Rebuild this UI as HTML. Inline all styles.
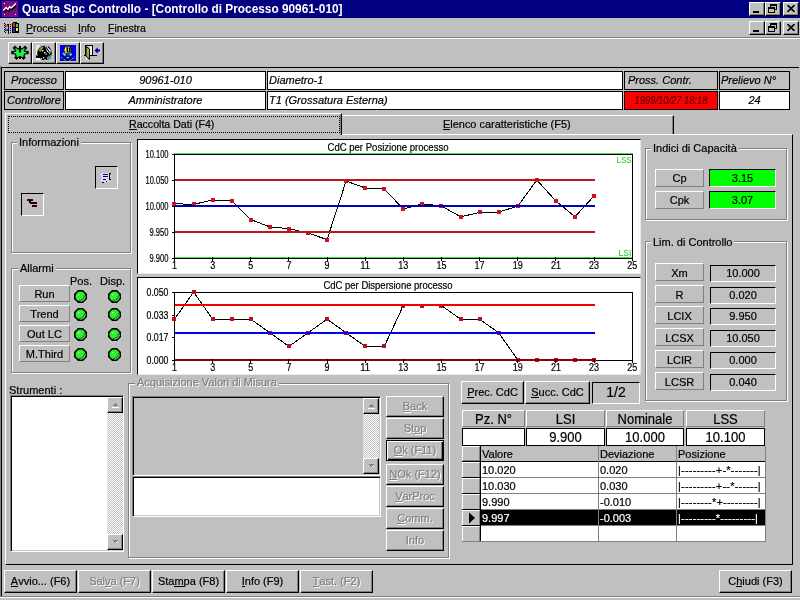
<!DOCTYPE html>
<html><head><meta charset="utf-8"><style>
*{box-sizing:border-box}
html,body{margin:0;padding:0}
body{-webkit-font-smoothing:antialiased;width:800px;height:600px;background:#c0c0c0;position:relative;overflow:hidden;font-family:"Liberation Sans",sans-serif;font-size:11px;color:#000}
.a{position:absolute}
.t{position:absolute;white-space:nowrap;line-height:13px;-webkit-text-stroke:0.2px currentColor}
.gl{-webkit-text-stroke:0.2px currentColor}
.rb{position:absolute;background:#c0c0c0;border:1px solid;border-color:#fff #000 #000 #fff;box-shadow:inset -1px -1px #808080}
.tr{position:absolute;background:#c0c0c0;border:1px solid;border-color:#fff #808080 #808080 #fff}
.sk{position:absolute;border:1px solid;border-color:#000 #fff #fff #000}
.s2{position:absolute;border:1px solid;border-color:#808080 #fff #fff #808080;box-shadow:inset 1px 1px #000,inset -1px -1px #c8c8c8}
.g{position:absolute;border:1px solid #808080;box-shadow:inset 1px 1px #fff,1px 1px #fff}
.gl{position:absolute;background:#c0c0c0;padding:0 2px;line-height:13px;white-space:nowrap}
.dis{color:#808080;text-shadow:1px 1px #fff}
u{text-decoration:none;position:relative}
u:after{content:"";position:absolute;left:0;right:0;bottom:0;height:1px;background:currentColor}
.dis u:after{box-shadow:1px 1px #fff}
</style></head><body><div style="position:absolute;left:0;top:0;width:800px;height:600px;will-change:transform">
<div class="a" style="left:0px;top:0px;width:800px;height:18px;background:#000080;"></div>
<svg class="a" style="left:2px;top:1px" width="16" height="16" viewBox="0 0 16 16" shape-rendering="crispEdges">
<rect x="0" y="0" width="16" height="16" fill="#780a88"/>
<rect x="2" y="2" width="1" height="1" fill="#fff"/><rect x="13" y="2" width="1" height="1" fill="#fff"/>
<rect x="2" y="13" width="1" height="1" fill="#fff"/><rect x="13" y="13" width="1" height="1" fill="#fff"/>
<polyline points="1.3,9.5 4,6.5 6,8.5 7.5,5.5 9,7 13.5,3" fill="none" stroke="#000" stroke-width="1.6" transform="translate(0.8,1.6)" shape-rendering="auto"/>
<polyline points="1.3,9.5 4,6.5 6,8.5 7.5,5.5 9,7 13.5,3" fill="none" stroke="#fff" stroke-width="1.3" shape-rendering="auto"/>
</svg>
<div class="t" style="left:22px;top:3px;font-size:11.85px;color:#fff;font-weight:bold;-webkit-text-stroke:0">Quarta Spc Controllo - [Controllo di Processo 90961-010]</div>
<div class="rb" style="left:749px;top:2px;width:16px;height:14px;"></div>
<div class="a" style="left:753px;top:11px;width:6px;height:2px;background:#000;"></div>
<div class="rb" style="left:765px;top:2px;width:16px;height:14px;"></div>
<svg class="a" style="left:768px;top:4px" width="9" height="9" viewBox="0 0 9 9" shape-rendering="crispEdges"><rect x="2.5" y="0.5" width="6" height="5" fill="none" stroke="#000"/><rect x="2" y="1" width="7" height="1" fill="#000"/><rect x="0.5" y="3.5" width="6" height="5" fill="#c0c0c0" stroke="#000"/><rect x="0" y="4" width="7" height="1" fill="#000"/></svg>
<div class="rb" style="left:783px;top:2px;width:16px;height:14px;"></div>
<svg class="a" style="left:787px;top:5px" width="8" height="7" viewBox="0 0 8 7"><path d="M0.5,0 L7.5,7 M7.5,0 L0.5,7" stroke="#000" stroke-width="1.6"/></svg>
<div class="rb" style="left:749px;top:21px;width:16px;height:14px;"></div>
<div class="a" style="left:753px;top:30px;width:6px;height:2px;background:#000;"></div>
<div class="rb" style="left:765px;top:21px;width:16px;height:14px;"></div>
<svg class="a" style="left:768px;top:23px" width="9" height="9" viewBox="0 0 9 9" shape-rendering="crispEdges"><rect x="2.5" y="0.5" width="6" height="5" fill="none" stroke="#000"/><rect x="2" y="1" width="7" height="1" fill="#000"/><rect x="0.5" y="3.5" width="6" height="5" fill="#c0c0c0" stroke="#000"/><rect x="0" y="4" width="7" height="1" fill="#000"/></svg>
<div class="rb" style="left:783px;top:21px;width:16px;height:14px;"></div>
<svg class="a" style="left:787px;top:24px" width="8" height="7" viewBox="0 0 8 7"><path d="M0.5,0 L7.5,7 M7.5,0 L0.5,7" stroke="#000" stroke-width="1.6"/></svg>
<svg class="a" style="left:0px;top:18px" width="24" height="20" viewBox="0 18 24 20" shape-rendering="crispEdges">
<rect x="4" y="25" width="8" height="2" fill="#f0a0a0"/><rect x="4" y="29" width="8" height="2" fill="#a8b8f0"/>
<rect x="6" y="25" width="3" height="2" fill="#e04040"/><rect x="6" y="29" width="3" height="2" fill="#3040c0"/>
<g fill="#000"><rect x="4" y="23" width="1" height="1"/><rect x="5" y="24" width="1" height="1"/><rect x="4" y="25" width="1" height="1"/><rect x="5" y="26" width="1" height="1"/><rect x="4" y="27" width="1" height="1"/><rect x="5" y="28" width="1" height="1"/><rect x="4" y="29" width="1" height="1"/><rect x="5" y="30" width="1" height="1"/><rect x="4" y="31" width="1" height="1"/><rect x="5" y="32" width="1" height="1"/>
<rect x="8" y="24" width="1" height="10"/><rect x="7" y="24" width="1" height="1"/>
<rect x="10" y="24" width="1" height="1"/><rect x="10" y="26" width="1" height="1"/><rect x="10" y="28" width="1" height="1"/><rect x="10" y="30" width="1" height="1"/><rect x="10" y="32" width="1" height="1"/>
<rect x="12" y="23" width="7" height="10"/><rect x="13" y="22" width="4" height="1"/></g>
<rect x="13" y="23" width="2" height="4" fill="#a05028"/><rect x="16" y="24" width="2" height="3" fill="#40d040"/>
<rect x="13" y="28" width="2" height="4" fill="#4020a0"/><rect x="16" y="28" width="2" height="3" fill="#f0f060"/>
</svg>
<div class="t" style="left:26px;top:22px;font-size:10.5px;"><u>P</u>rocessi</div>
<div class="t" style="left:78px;top:22px;font-size:10.5px;"><u>I</u>nfo</div>
<div class="t" style="left:108px;top:22px;font-size:10.5px;"><u>F</u>inestra</div>
<div class="a" style="left:0px;top:37px;width:800px;height:1px;background:#808080;"></div>
<div class="a" style="left:0px;top:38px;width:800px;height:1px;background:#fff;"></div>
<div class="rb" style="left:8px;top:42px;width:24px;height:22px;"></div>
<div class="rb" style="left:32px;top:42px;width:24px;height:22px;"></div>
<div class="rb" style="left:56px;top:42px;width:24px;height:22px;"></div>
<div class="rb" style="left:80px;top:42px;width:24px;height:22px;"></div>
<svg class="a" style="left:10px;top:44px" width="20" height="17" viewBox="0 0 20 17">
<g stroke="#000" stroke-width="3.4" stroke-linecap="square"><path d="M10,9 L5,4 M10,9 L15,4 M10,9 L3,8.5 M10,9 L17,8.5 M10,9 L6.5,13.5 M10,9 L13.5,13.5"/></g>
<ellipse cx="10" cy="9" rx="5.6" ry="5" fill="#000"/>
<g stroke="#20f040" stroke-width="1.5"><path d="M10,9 L5.5,4.5 M10,9 L14.5,4.5 M10,9 L3.5,8.5 M10,9 L16.5,8.5 M10,9 L7,13 M10,9 L13,13"/></g>
<ellipse cx="10" cy="9" rx="4.4" ry="3.8" fill="#20f040"/>
<rect x="9" y="2" width="2" height="6.5" fill="#000"/><rect x="9" y="12" width="2" height="3" fill="#000"/>
</svg>
<svg class="a" style="left:32px;top:42px" width="24" height="22" viewBox="0 0 24 22">
<rect x="4" y="3" width="4" height="10" fill="#e8e8e8"/>
<circle cx="12.5" cy="11" r="7.3" fill="#000"/>
<path d="M6.5,8.5 L8,5.5 L11.5,4.5 L11,6.5 L8.5,10 Z" fill="#8a8a40"/>
<path d="M13,4 L16,4.5 L18.8,8.5 L18,12 L15,9.5 Z" fill="#f4f4f4"/>
<path d="M14,5 L17.5,10.5 M16,4.5 L18,7" stroke="#000" stroke-width="1.1"/>
<rect x="10" y="8" width="1.4" height="1.4" fill="#f0f0a0"/><rect x="12" y="10" width="1.4" height="1.4" fill="#fff"/><rect x="13.5" y="11.5" width="1.2" height="1.2" fill="#fff"/>
<rect x="4" y="13.5" width="8" height="2.6" fill="#000"/>
<rect x="4" y="16" width="4.5" height="2.5" fill="#f4f4f4"/>
<rect x="9" y="16" width="1.2" height="1.2" fill="#d0d0ff"/><rect x="11" y="15" width="1.2" height="1.2" fill="#fff"/><rect x="12.5" y="17" width="1.2" height="1.2" fill="#e0e0ff"/>
<path d="M14.5,15.5 L18.5,12.5 L19,16.5 L16,18.5 Z" fill="#409a9a"/>
</svg>
<svg class="a" style="left:60px;top:45px" width="16" height="16" viewBox="0 0 16 16">
<rect x="0" y="0" width="16" height="16" fill="#0000e8"/>
<ellipse cx="7.5" cy="5" rx="3.6" ry="4" fill="#e8e850" stroke="#000" stroke-width="0.8"/>
<rect x="6.6" y="2" width="1.4" height="5.5" fill="#000"/>
<path d="M9,2.5 Q10.8,5 8.5,7.5" stroke="#000" stroke-width="1.2" fill="none"/>
<rect x="7" y="8.5" width="2" height="2" fill="#404000"/>
<path d="M3,8 L5.5,10.5 M11.5,8.5 L9.8,10.5" stroke="#40d8f0" stroke-width="2"/>
<path d="M1.5,10.5 L7.5,15.8 L14,10.5" stroke="#000" stroke-width="1.2" fill="none"/>
<path d="M0.8,11.8 L7.5,17 L14.8,11.8" stroke="#b0b0ff" stroke-width="1" fill="none" stroke-dasharray="1.2,0.8"/>
<rect x="6.5" y="12" width="2.5" height="1.2" fill="#60e0e0"/>
</svg>
<svg class="a" style="left:80px;top:42px" width="24" height="22" viewBox="0 0 24 22" shape-rendering="crispEdges">
<rect x="6" y="4" width="1" height="14" fill="#e8e8e8"/>
<rect x="10" y="4" width="2.5" height="10" fill="#f0f0f0"/>
<rect x="5" y="3" width="8" height="1" fill="#000"/><rect x="12" y="3" width="1" height="11" fill="#000"/>
<rect x="5" y="3" width="1" height="11" fill="#000"/><rect x="4" y="13" width="13" height="1" fill="#000"/>
<path d="M6,4.5 L9.5,7 L9.5,17.5 L6,14 Z" fill="#a8a840" stroke="#000" stroke-width="1" shape-rendering="auto"/>
<path d="M14.5,8.5 L17.5,5.5 L18,7.5 L20,7.5 L20,9.5 L18,9.5 L17.5,11.5 Z" fill="#0000b0" shape-rendering="auto"/>
</svg>
<div class="a" style="left:1px;top:67px;width:798px;height:1px;background:#000;"></div>
<div class="a" style="left:1px;top:67px;width:1px;height:530px;background:#000;"></div>
<div class="a" style="left:0px;top:66px;width:1px;height:531px;background:#808080;"></div>
<div class="a" style="left:4px;top:71px;width:60px;height:19px;background:#c0c0c0;border:1px solid #000"></div>
<div class="t" style="left:4px;top:74px;width:60px;text-align:center;font-style:italic;color:#000;">Processo</div>
<div class="a" style="left:65px;top:71px;width:201px;height:19px;background:#fff;border:1px solid #000"></div>
<div class="t" style="left:65px;top:74px;width:201px;text-align:center;font-style:italic;color:#000;">90961-010</div>
<div class="a" style="left:267px;top:71px;width:356px;height:19px;background:#fff;border:1px solid #000"></div>
<div class="t" style="left:269px;top:74px;font-style:italic;color:#000">Diametro-1</div>
<div class="a" style="left:624px;top:71px;width:94px;height:19px;background:#c0c0c0;border:1px solid #000"></div>
<div class="t" style="left:628px;top:74px;font-style:italic;color:#000">Pross. Contr.</div>
<div class="a" style="left:719px;top:71px;width:71px;height:19px;background:#c0c0c0;border:1px solid #000"></div>
<div class="t" style="left:721px;top:74px;font-style:italic;color:#000">Prelievo N°</div>
<div class="a" style="left:4px;top:91px;width:60px;height:19px;background:#c0c0c0;border:1px solid #000"></div>
<div class="t" style="left:4px;top:94px;width:60px;text-align:center;font-style:italic;color:#000;">Controllore</div>
<div class="a" style="left:65px;top:91px;width:201px;height:19px;background:#fff;border:1px solid #000"></div>
<div class="t" style="left:65px;top:94px;width:201px;text-align:center;font-style:italic;color:#000;">Amministratore</div>
<div class="a" style="left:267px;top:91px;width:356px;height:19px;background:#fff;border:1px solid #000"></div>
<div class="t" style="left:269px;top:94px;font-style:italic;color:#000">T1 (Grossatura Esterna)</div>
<div class="a" style="left:624px;top:91px;width:94px;height:19px;background:#ff0000;border:1px solid #000"></div>
<div class="t" style="left:624px;top:94px;width:94px;text-align:center;font-style:italic;color:#500000;transform:scaleX(0.85)">1999/10/27 18:18</div>
<div class="a" style="left:719px;top:91px;width:71px;height:19px;background:#fff;border:1px solid #000"></div>
<div class="t" style="left:719px;top:94px;width:71px;text-align:center;font-style:italic;color:#000;">24</div>
<div class="a" style="left:5px;top:134px;width:788px;height:431px;border:1px solid;border-color:#fff #000 #000 #fff"></div>
<div class="a" style="left:342px;top:115px;width:332px;height:19px;border-top:1px solid #fff;border-right:1px solid #000;box-shadow:inset -1px 0 #808080"></div>
<div class="a" style="left:5px;top:113px;width:337px;height:22px;background:#c0c0c0;border-top:1px solid #fff;border-left:1px solid #fff;border-right:1px solid #000;box-shadow:inset -1px 0 #808080"></div>
<div class="a" style="left:8px;top:116px;width:332px;height:17px;border:1px dotted #000"></div>
<div class="t" style="left:129px;top:118px;font-size:10.6px;"><u>R</u>accolta Dati (F4)</div>
<div class="t" style="left:443px;top:118px;font-size:10.95px;"><u>E</u>lenco caratteristiche (F5)</div>
<div class="g" style="left:11px;top:142px;width:120px;height:111px;"></div>
<div class="gl" style="left:17px;top:136px;font-size:11px;">Informazioni</div>
<div class="sk" style="left:95px;top:166px;width:23px;height:23px;"></div>
<svg class="a" style="left:100px;top:172px" width="12" height="12" viewBox="0 0 12 12" shape-rendering="crispEdges">
<rect x="1" y="1" width="8" height="9" fill="#d8d8f8"/>
<rect x="3" y="2" width="5" height="1" fill="#000080"/><rect x="3" y="4" width="5" height="1" fill="#000080"/><rect x="3" y="7" width="3" height="1" fill="#000080"/>
<rect x="9" y="1" width="2" height="7" fill="#000"/><rect x="10" y="2" width="1" height="5" fill="#c0c0c0"/>
<rect x="2" y="10" width="2" height="1" fill="#000"/><rect x="6" y="9" width="1" height="1" fill="#000"/>
</svg>
<div class="sk" style="left:21px;top:193px;width:23px;height:23px;"></div>
<svg class="a" style="left:26px;top:198px" width="14" height="12" viewBox="0 0 14 12" shape-rendering="crispEdges">
<rect x="1" y="1" width="6" height="2" fill="#400000"/><rect x="3" y="2" width="2" height="3" fill="#000"/>
<rect x="4" y="4" width="7" height="2" fill="#200000"/><rect x="6" y="7" width="5" height="2" fill="#200000"/>
</svg>
<div class="g" style="left:11px;top:268px;width:120px;height:105px;"></div>
<div class="gl" style="left:18px;top:262px;font-size:11px;">Allarmi</div>
<div class="t" style="left:70px;top:275px;font-size:11px;">Pos.</div>
<div class="t" style="left:100px;top:275px;font-size:11px;">Disp.</div>
<div class="tr" style="left:19px;top:285px;width:51px;height:17px;"></div>
<div class="t" style="left:19.0px;top:288px;width:51px;text-align:center;font-size:11px;">Run</div>
<svg class="a" style="left:74px;top:290px" width="13" height="13" viewBox="0 0 13 13"><polygon points="4,0 9,0 13,4 13,9 9,13 4,13 0,9 0,4" fill="#000"/><circle cx="6.5" cy="6.5" r="5.1" fill="#28e028"/><circle cx="6.2" cy="6.2" r="3.9" fill="#30f030"/><path d="M10.2,5.6 A4,4 0 0 1 5.4,10.3" stroke="#005000" stroke-width="1" fill="none"/><path d="M11.2,6.5 A4.8,4.8 0 0 1 6.5,11.2" stroke="#70ff70" stroke-width="0.8" fill="none"/><rect x="4" y="4" width="1.5" height="1.5" fill="#b0ffb0"/></svg>
<svg class="a" style="left:108px;top:290px" width="13" height="13" viewBox="0 0 13 13"><polygon points="4,0 9,0 13,4 13,9 9,13 4,13 0,9 0,4" fill="#000"/><circle cx="6.5" cy="6.5" r="5.1" fill="#28e028"/><circle cx="6.2" cy="6.2" r="3.9" fill="#30f030"/><path d="M10.2,5.6 A4,4 0 0 1 5.4,10.3" stroke="#005000" stroke-width="1" fill="none"/><path d="M11.2,6.5 A4.8,4.8 0 0 1 6.5,11.2" stroke="#70ff70" stroke-width="0.8" fill="none"/><rect x="4" y="4" width="1.5" height="1.5" fill="#b0ffb0"/></svg>
<div class="tr" style="left:19px;top:305px;width:51px;height:17px;"></div>
<div class="t" style="left:19.0px;top:308px;width:51px;text-align:center;font-size:11px;">Trend</div>
<svg class="a" style="left:74px;top:308px" width="13" height="13" viewBox="0 0 13 13"><polygon points="4,0 9,0 13,4 13,9 9,13 4,13 0,9 0,4" fill="#000"/><circle cx="6.5" cy="6.5" r="5.1" fill="#28e028"/><circle cx="6.2" cy="6.2" r="3.9" fill="#30f030"/><path d="M10.2,5.6 A4,4 0 0 1 5.4,10.3" stroke="#005000" stroke-width="1" fill="none"/><path d="M11.2,6.5 A4.8,4.8 0 0 1 6.5,11.2" stroke="#70ff70" stroke-width="0.8" fill="none"/><rect x="4" y="4" width="1.5" height="1.5" fill="#b0ffb0"/></svg>
<svg class="a" style="left:108px;top:308px" width="13" height="13" viewBox="0 0 13 13"><polygon points="4,0 9,0 13,4 13,9 9,13 4,13 0,9 0,4" fill="#000"/><circle cx="6.5" cy="6.5" r="5.1" fill="#28e028"/><circle cx="6.2" cy="6.2" r="3.9" fill="#30f030"/><path d="M10.2,5.6 A4,4 0 0 1 5.4,10.3" stroke="#005000" stroke-width="1" fill="none"/><path d="M11.2,6.5 A4.8,4.8 0 0 1 6.5,11.2" stroke="#70ff70" stroke-width="0.8" fill="none"/><rect x="4" y="4" width="1.5" height="1.5" fill="#b0ffb0"/></svg>
<div class="tr" style="left:19px;top:325px;width:51px;height:17px;"></div>
<div class="t" style="left:19.0px;top:328px;width:51px;text-align:center;font-size:11px;">Out LC</div>
<svg class="a" style="left:74px;top:328px" width="13" height="13" viewBox="0 0 13 13"><polygon points="4,0 9,0 13,4 13,9 9,13 4,13 0,9 0,4" fill="#000"/><circle cx="6.5" cy="6.5" r="5.1" fill="#28e028"/><circle cx="6.2" cy="6.2" r="3.9" fill="#30f030"/><path d="M10.2,5.6 A4,4 0 0 1 5.4,10.3" stroke="#005000" stroke-width="1" fill="none"/><path d="M11.2,6.5 A4.8,4.8 0 0 1 6.5,11.2" stroke="#70ff70" stroke-width="0.8" fill="none"/><rect x="4" y="4" width="1.5" height="1.5" fill="#b0ffb0"/></svg>
<svg class="a" style="left:108px;top:328px" width="13" height="13" viewBox="0 0 13 13"><polygon points="4,0 9,0 13,4 13,9 9,13 4,13 0,9 0,4" fill="#000"/><circle cx="6.5" cy="6.5" r="5.1" fill="#28e028"/><circle cx="6.2" cy="6.2" r="3.9" fill="#30f030"/><path d="M10.2,5.6 A4,4 0 0 1 5.4,10.3" stroke="#005000" stroke-width="1" fill="none"/><path d="M11.2,6.5 A4.8,4.8 0 0 1 6.5,11.2" stroke="#70ff70" stroke-width="0.8" fill="none"/><rect x="4" y="4" width="1.5" height="1.5" fill="#b0ffb0"/></svg>
<div class="tr" style="left:19px;top:345px;width:51px;height:17px;"></div>
<div class="t" style="left:19.0px;top:348px;width:51px;text-align:center;font-size:11px;">M.Third</div>
<svg class="a" style="left:74px;top:348px" width="13" height="13" viewBox="0 0 13 13"><polygon points="4,0 9,0 13,4 13,9 9,13 4,13 0,9 0,4" fill="#000"/><circle cx="6.5" cy="6.5" r="5.1" fill="#28e028"/><circle cx="6.2" cy="6.2" r="3.9" fill="#30f030"/><path d="M10.2,5.6 A4,4 0 0 1 5.4,10.3" stroke="#005000" stroke-width="1" fill="none"/><path d="M11.2,6.5 A4.8,4.8 0 0 1 6.5,11.2" stroke="#70ff70" stroke-width="0.8" fill="none"/><rect x="4" y="4" width="1.5" height="1.5" fill="#b0ffb0"/></svg>
<svg class="a" style="left:108px;top:348px" width="13" height="13" viewBox="0 0 13 13"><polygon points="4,0 9,0 13,4 13,9 9,13 4,13 0,9 0,4" fill="#000"/><circle cx="6.5" cy="6.5" r="5.1" fill="#28e028"/><circle cx="6.2" cy="6.2" r="3.9" fill="#30f030"/><path d="M10.2,5.6 A4,4 0 0 1 5.4,10.3" stroke="#005000" stroke-width="1" fill="none"/><path d="M11.2,6.5 A4.8,4.8 0 0 1 6.5,11.2" stroke="#70ff70" stroke-width="0.8" fill="none"/><rect x="4" y="4" width="1.5" height="1.5" fill="#b0ffb0"/></svg>
<div class="t" style="left:9px;top:384px;font-size:11px;">Strumenti :</div>
<div class="s2" style="left:10px;top:395px;width:114px;height:157px;background:#fff"></div>
<div class="a" style="left:107px;top:397px;width:16px;height:153px;background:#e0e0e0;background-image:repeating-conic-gradient(#c0c0c0 0 25%,#fff 0 50%);background-size:2px 2px"></div>
<div class="rb" style="left:107px;top:397px;width:16px;height:16px;"></div>
<svg class="a" style="left:111px;top:402px" width="8" height="6" viewBox="0 0 8 6" shape-rendering="crispEdges"><path d="M1,4 L4,1 L7,4 Z" fill="#808080"/><rect x="1" y="5" width="7" height="1" fill="#fff"/></svg>
<div class="rb" style="left:107px;top:534px;width:16px;height:16px;"></div>
<svg class="a" style="left:111px;top:539px" width="8" height="6" viewBox="0 0 8 6" shape-rendering="crispEdges"><path d="M1,1 L7,1 L4,4 Z" fill="#808080"/><path d="M5,4 L7,2" stroke="#fff"/></svg>
<div class="g" style="left:128px;top:383px;width:321px;height:175px;"></div>
<div class="gl dis" style="left:135px;top:376px;font-size:11px;">Acquisizione Valori di Misura</div>
<div class="s2" style="left:132px;top:396px;width:249px;height:80px;background:#c0c0c0"></div>
<div class="a" style="left:363px;top:398px;width:16px;height:76px;background:#e0e0e0;background-image:repeating-conic-gradient(#c0c0c0 0 25%,#fff 0 50%);background-size:2px 2px"></div>
<div class="rb" style="left:363px;top:398px;width:16px;height:16px;"></div>
<svg class="a" style="left:367px;top:403px" width="8" height="6" viewBox="0 0 8 6" shape-rendering="crispEdges"><path d="M1,4 L4,1 L7,4 Z" fill="#808080"/><rect x="1" y="5" width="7" height="1" fill="#fff"/></svg>
<div class="rb" style="left:363px;top:458px;width:16px;height:16px;"></div>
<svg class="a" style="left:367px;top:463px" width="8" height="6" viewBox="0 0 8 6" shape-rendering="crispEdges"><path d="M1,1 L7,1 L4,4 Z" fill="#808080"/><path d="M5,4 L7,2" stroke="#fff"/></svg>
<div class="s2" style="left:132px;top:476px;width:249px;height:41px;background:#fff"></div>
<div class="rb" style="left:386px;top:396px;width:58px;height:21px;"></div>
<div class="t dis" style="left:386.0px;top:400px;width:58px;text-align:center;font-size:11px;"><u>B</u>ack</div>
<div class="rb" style="left:386px;top:418px;width:58px;height:21px;"></div>
<div class="t dis" style="left:386.0px;top:422px;width:58px;text-align:center;font-size:11px;">St<u>o</u>p</div>
<div class="a" style="left:386px;top:440px;width:58px;height:21px;background:#c0c0c0;border:1px solid #000;box-shadow:inset 1px 1px #fff,inset -1px -1px #000,inset -2px -2px #808080"></div>
<div class="t dis" style="left:386.0px;top:444px;width:58px;text-align:center;font-size:11px;"><u>O</u>k (F11)</div>
<div class="rb" style="left:386px;top:464px;width:58px;height:21px;"></div>
<div class="t dis" style="left:386.0px;top:468px;width:58px;text-align:center;font-size:11px;"><u>N</u>Ok (F12)</div>
<div class="rb" style="left:386px;top:486px;width:58px;height:21px;"></div>
<div class="t dis" style="left:386.0px;top:490px;width:58px;text-align:center;font-size:11px;"><u>V</u>arProc</div>
<div class="rb" style="left:386px;top:508px;width:58px;height:21px;"></div>
<div class="t dis" style="left:386.0px;top:512px;width:58px;text-align:center;font-size:11px;"><u>C</u>omm.</div>
<div class="rb" style="left:386px;top:530px;width:58px;height:21px;"></div>
<div class="t dis" style="left:386.0px;top:534px;width:58px;text-align:center;font-size:11px;">Info</div>
<div class="a" style="left:137px;top:139px;width:504px;height:135px;background:#fff;border:1px solid;border-color:#000 #e8e8e8 #e8e8e8 #000"></div>
<div class="a" style="left:137px;top:277px;width:504px;height:98px;background:#fff;border:1px solid;border-color:#000 #e8e8e8 #e8e8e8 #000"></div>
<svg class="a" style="left:0;top:0;pointer-events:none" width="800" height="600" viewBox="0 0 800 600" shape-rendering="crispEdges">
<style>text{stroke:currentColor;stroke-width:0.2px}</style>
<text x="388" y="150.5" font-family="Liberation Sans" font-size="10" text-anchor="middle" textLength="121" lengthAdjust="spacingAndGlyphs">CdC per Posizione processo</text>
<rect x="174" y="153" width="459" height="1" fill="#40e040"/>
<rect x="174" y="257" width="459" height="1" fill="#40e040"/>
<rect x="174" y="154" width="459" height="1" fill="#000"/>
<rect x="174" y="258" width="459" height="1" fill="#000"/>
<rect x="174" y="154" width="1" height="105" fill="#000"/>
<rect x="632" y="154" width="1" height="105" fill="#000"/>
<rect x="172" y="154" width="2" height="1" fill="#000"/>
<text x="168.5" y="158" font-family="Liberation Sans" font-size="10.5" text-anchor="end" textLength="23" lengthAdjust="spacingAndGlyphs">10.100</text>
<rect x="172" y="180" width="2" height="1" fill="#000"/>
<text x="168.5" y="184" font-family="Liberation Sans" font-size="10.5" text-anchor="end" textLength="23" lengthAdjust="spacingAndGlyphs">10.050</text>
<rect x="172" y="206" width="2" height="1" fill="#000"/>
<text x="168.5" y="210" font-family="Liberation Sans" font-size="10.5" text-anchor="end" textLength="23" lengthAdjust="spacingAndGlyphs">10.000</text>
<rect x="172" y="232" width="2" height="1" fill="#000"/>
<text x="168.5" y="236" font-family="Liberation Sans" font-size="10.5" text-anchor="end" textLength="19" lengthAdjust="spacingAndGlyphs">9.950</text>
<rect x="172" y="258" width="2" height="1" fill="#000"/>
<text x="168.5" y="262" font-family="Liberation Sans" font-size="10.5" text-anchor="end" textLength="19" lengthAdjust="spacingAndGlyphs">9.900</text>
<rect x="174" y="257" width="1" height="4" fill="#000"/>
<text x="174.5" y="269" font-family="Liberation Sans" font-size="10.5" text-anchor="middle" textLength="5" lengthAdjust="spacingAndGlyphs">1</text>
<rect x="212" y="257" width="1" height="4" fill="#000"/>
<text x="212.64" y="269" font-family="Liberation Sans" font-size="10.5" text-anchor="middle" textLength="5" lengthAdjust="spacingAndGlyphs">3</text>
<rect x="250" y="257" width="1" height="4" fill="#000"/>
<text x="250.78" y="269" font-family="Liberation Sans" font-size="10.5" text-anchor="middle" textLength="5" lengthAdjust="spacingAndGlyphs">5</text>
<rect x="288" y="257" width="1" height="4" fill="#000"/>
<text x="288.92" y="269" font-family="Liberation Sans" font-size="10.5" text-anchor="middle" textLength="5" lengthAdjust="spacingAndGlyphs">7</text>
<rect x="327" y="257" width="1" height="4" fill="#000"/>
<text x="327.06" y="269" font-family="Liberation Sans" font-size="10.5" text-anchor="middle" textLength="5" lengthAdjust="spacingAndGlyphs">9</text>
<rect x="365" y="257" width="1" height="4" fill="#000"/>
<text x="365.2" y="269" font-family="Liberation Sans" font-size="10.5" text-anchor="middle" textLength="10" lengthAdjust="spacingAndGlyphs">11</text>
<rect x="403" y="257" width="1" height="4" fill="#000"/>
<text x="403.34000000000003" y="269" font-family="Liberation Sans" font-size="10.5" text-anchor="middle" textLength="10" lengthAdjust="spacingAndGlyphs">13</text>
<rect x="441" y="257" width="1" height="4" fill="#000"/>
<text x="441.48" y="269" font-family="Liberation Sans" font-size="10.5" text-anchor="middle" textLength="10" lengthAdjust="spacingAndGlyphs">15</text>
<rect x="479" y="257" width="1" height="4" fill="#000"/>
<text x="479.62" y="269" font-family="Liberation Sans" font-size="10.5" text-anchor="middle" textLength="10" lengthAdjust="spacingAndGlyphs">17</text>
<rect x="517" y="257" width="1" height="4" fill="#000"/>
<text x="517.76" y="269" font-family="Liberation Sans" font-size="10.5" text-anchor="middle" textLength="10" lengthAdjust="spacingAndGlyphs">19</text>
<rect x="555" y="257" width="1" height="4" fill="#000"/>
<text x="555.9" y="269" font-family="Liberation Sans" font-size="10.5" text-anchor="middle" textLength="10" lengthAdjust="spacingAndGlyphs">21</text>
<rect x="594" y="257" width="1" height="4" fill="#000"/>
<text x="594.04" y="269" font-family="Liberation Sans" font-size="10.5" text-anchor="middle" textLength="10" lengthAdjust="spacingAndGlyphs">23</text>
<rect x="632" y="257" width="1" height="4" fill="#000"/>
<text x="632.1800000000001" y="269" font-family="Liberation Sans" font-size="10.5" text-anchor="middle" textLength="10" lengthAdjust="spacingAndGlyphs">25</text>
<text x="631.5" y="163" font-family="Liberation Sans" font-size="9.5" fill="#20c020" style="stroke:none" text-anchor="end" textLength="15" lengthAdjust="spacingAndGlyphs">LSS</text>
<text x="631.5" y="256" font-family="Liberation Sans" font-size="9.5" fill="#20c020" style="stroke:none" text-anchor="end" textLength="13" lengthAdjust="spacingAndGlyphs">LSI</text>
<polyline points="174.5,203.7 193.6,204.4 212.6,199.9 231.7,200.9 250.8,219.6 269.9,226.9 288.9,228.7 308.0,233.0 327.1,239.6 346.1,181.0 365.2,188.0 384.3,189.0 403.3,209.0 422.4,203.8 441.5,206.0 460.6,216.8 479.6,212.5 498.7,212.0 517.8,206.2 536.8,180.0 555.9,201.0 575.0,216.8 594.0,196.0" fill="none" stroke="#000" stroke-width="1" shape-rendering="crispEdges"/>
<rect x="172" y="202" width="4" height="4" fill="#d01020"/>
<rect x="192" y="202" width="4" height="4" fill="#d01020"/>
<rect x="211" y="198" width="4" height="4" fill="#d01020"/>
<rect x="230" y="199" width="4" height="4" fill="#d01020"/>
<rect x="249" y="218" width="4" height="4" fill="#d01020"/>
<rect x="268" y="225" width="4" height="4" fill="#d01020"/>
<rect x="287" y="227" width="4" height="4" fill="#d01020"/>
<rect x="306" y="231" width="4" height="4" fill="#d01020"/>
<rect x="325" y="238" width="4" height="4" fill="#d01020"/>
<rect x="344" y="179" width="4" height="4" fill="#d01020"/>
<rect x="363" y="186" width="4" height="4" fill="#d01020"/>
<rect x="382" y="187" width="4" height="4" fill="#d01020"/>
<rect x="401" y="207" width="4" height="4" fill="#d01020"/>
<rect x="420" y="202" width="4" height="4" fill="#d01020"/>
<rect x="439" y="204" width="4" height="4" fill="#d01020"/>
<rect x="459" y="215" width="4" height="4" fill="#d01020"/>
<rect x="478" y="210" width="4" height="4" fill="#d01020"/>
<rect x="497" y="210" width="4" height="4" fill="#d01020"/>
<rect x="516" y="204" width="4" height="4" fill="#d01020"/>
<rect x="535" y="178" width="4" height="4" fill="#d01020"/>
<rect x="554" y="199" width="4" height="4" fill="#d01020"/>
<rect x="573" y="215" width="4" height="4" fill="#d01020"/>
<rect x="592" y="194" width="4" height="4" fill="#d01020"/>
<rect x="175" y="179" width="420" height="2" fill="#b81818"/>
<rect x="175" y="231" width="420" height="2" fill="#b81818"/>
<rect x="175" y="205" width="420" height="2" fill="#0000b8"/>
<text x="388" y="288.5" font-family="Liberation Sans" font-size="10" text-anchor="middle" textLength="129" lengthAdjust="spacingAndGlyphs">CdC per Dispersione processo</text>
<rect x="174" y="292" width="459" height="1" fill="#000"/>
<rect x="174" y="360" width="459" height="1" fill="#000"/>
<rect x="174" y="292" width="1" height="69" fill="#000"/>
<rect x="632" y="292" width="1" height="69" fill="#000"/>
<polyline points="174.5,319.2 193.6,292.0 212.6,319.2 231.7,319.2 250.8,319.2 269.9,332.8 288.9,346.4 308.0,332.8 327.1,319.2 346.1,332.8 365.2,346.4 384.3,346.4 403.3,305.6 422.4,305.6 441.5,305.6 460.6,319.2 479.6,319.2 498.7,332.8 517.8,360.0 536.8,360.0 555.9,360.0 575.0,360.0 594.0,360.0" fill="none" stroke="#000" stroke-width="1" shape-rendering="crispEdges"/>
<rect x="172" y="317" width="4" height="4" fill="#b81020"/>
<rect x="192" y="290" width="4" height="4" fill="#b81020"/>
<rect x="211" y="317" width="4" height="4" fill="#b81020"/>
<rect x="230" y="317" width="4" height="4" fill="#b81020"/>
<rect x="249" y="317" width="4" height="4" fill="#b81020"/>
<rect x="268" y="331" width="4" height="4" fill="#b81020"/>
<rect x="287" y="344" width="4" height="4" fill="#b81020"/>
<rect x="306" y="331" width="4" height="4" fill="#b81020"/>
<rect x="325" y="317" width="4" height="4" fill="#b81020"/>
<rect x="344" y="331" width="4" height="4" fill="#b81020"/>
<rect x="363" y="344" width="4" height="4" fill="#b81020"/>
<rect x="382" y="344" width="4" height="4" fill="#b81020"/>
<rect x="401" y="304" width="4" height="4" fill="#b81020"/>
<rect x="420" y="304" width="4" height="4" fill="#b81020"/>
<rect x="439" y="304" width="4" height="4" fill="#b81020"/>
<rect x="459" y="317" width="4" height="4" fill="#b81020"/>
<rect x="478" y="317" width="4" height="4" fill="#b81020"/>
<rect x="497" y="331" width="4" height="4" fill="#b81020"/>
<rect x="516" y="358" width="4" height="4" fill="#b81020"/>
<rect x="535" y="358" width="4" height="4" fill="#b81020"/>
<rect x="554" y="358" width="4" height="4" fill="#b81020"/>
<rect x="573" y="358" width="4" height="4" fill="#b81020"/>
<rect x="592" y="358" width="4" height="4" fill="#b81020"/>
<rect x="175" y="304" width="420" height="2" fill="#f00000"/>
<rect x="175" y="332" width="420" height="2" fill="#0000f0"/>
<rect x="175" y="359" width="420" height="2" fill="#900000"/>
<rect x="172" y="292" width="2" height="1" fill="#000"/>
<text x="168.5" y="295.5" font-family="Liberation Sans" font-size="10.5" text-anchor="end" textLength="22" lengthAdjust="spacingAndGlyphs">0.050</text>
<rect x="172" y="315" width="2" height="1" fill="#000"/>
<text x="168.5" y="318.5" font-family="Liberation Sans" font-size="10.5" text-anchor="end" textLength="22" lengthAdjust="spacingAndGlyphs">0.033</text>
<rect x="172" y="337" width="2" height="1" fill="#000"/>
<text x="168.5" y="340.5" font-family="Liberation Sans" font-size="10.5" text-anchor="end" textLength="22" lengthAdjust="spacingAndGlyphs">0.017</text>
<rect x="172" y="360" width="2" height="1" fill="#000"/>
<text x="168.5" y="363.5" font-family="Liberation Sans" font-size="10.5" text-anchor="end" textLength="22" lengthAdjust="spacingAndGlyphs">0.000</text>
<rect x="174" y="359" width="1" height="4" fill="#000"/>
<text x="174.5" y="371" font-family="Liberation Sans" font-size="10.5" text-anchor="middle" textLength="5" lengthAdjust="spacingAndGlyphs">1</text>
<rect x="212" y="359" width="1" height="4" fill="#000"/>
<text x="212.64" y="371" font-family="Liberation Sans" font-size="10.5" text-anchor="middle" textLength="5" lengthAdjust="spacingAndGlyphs">3</text>
<rect x="250" y="359" width="1" height="4" fill="#000"/>
<text x="250.78" y="371" font-family="Liberation Sans" font-size="10.5" text-anchor="middle" textLength="5" lengthAdjust="spacingAndGlyphs">5</text>
<rect x="288" y="359" width="1" height="4" fill="#000"/>
<text x="288.92" y="371" font-family="Liberation Sans" font-size="10.5" text-anchor="middle" textLength="5" lengthAdjust="spacingAndGlyphs">7</text>
<rect x="327" y="359" width="1" height="4" fill="#000"/>
<text x="327.06" y="371" font-family="Liberation Sans" font-size="10.5" text-anchor="middle" textLength="5" lengthAdjust="spacingAndGlyphs">9</text>
<rect x="365" y="359" width="1" height="4" fill="#000"/>
<text x="365.2" y="371" font-family="Liberation Sans" font-size="10.5" text-anchor="middle" textLength="10" lengthAdjust="spacingAndGlyphs">11</text>
<rect x="403" y="359" width="1" height="4" fill="#000"/>
<text x="403.34000000000003" y="371" font-family="Liberation Sans" font-size="10.5" text-anchor="middle" textLength="10" lengthAdjust="spacingAndGlyphs">13</text>
<rect x="441" y="359" width="1" height="4" fill="#000"/>
<text x="441.48" y="371" font-family="Liberation Sans" font-size="10.5" text-anchor="middle" textLength="10" lengthAdjust="spacingAndGlyphs">15</text>
<rect x="479" y="359" width="1" height="4" fill="#000"/>
<text x="479.62" y="371" font-family="Liberation Sans" font-size="10.5" text-anchor="middle" textLength="10" lengthAdjust="spacingAndGlyphs">17</text>
<rect x="517" y="359" width="1" height="4" fill="#000"/>
<text x="517.76" y="371" font-family="Liberation Sans" font-size="10.5" text-anchor="middle" textLength="10" lengthAdjust="spacingAndGlyphs">19</text>
<rect x="555" y="359" width="1" height="4" fill="#000"/>
<text x="555.9" y="371" font-family="Liberation Sans" font-size="10.5" text-anchor="middle" textLength="10" lengthAdjust="spacingAndGlyphs">21</text>
<rect x="594" y="359" width="1" height="4" fill="#000"/>
<text x="594.04" y="371" font-family="Liberation Sans" font-size="10.5" text-anchor="middle" textLength="10" lengthAdjust="spacingAndGlyphs">23</text>
<rect x="632" y="359" width="1" height="4" fill="#000"/>
<text x="632.1800000000001" y="371" font-family="Liberation Sans" font-size="10.5" text-anchor="middle" textLength="10" lengthAdjust="spacingAndGlyphs">25</text>
</svg>
<div class="g" style="left:645px;top:148px;width:142px;height:72px;"></div>
<div class="gl" style="left:651px;top:142px;font-size:11px;">Indici di Capacità</div>
<div class="tr" style="left:655px;top:169px;width:49px;height:18px;"></div>
<div class="t" style="left:655.0px;top:172px;width:49px;text-align:center;font-size:11px;">Cp</div>
<div class="sk" style="left:709px;top:169px;width:67px;height:18px;background:#00ff00"></div>
<div class="t" style="left:709.0px;top:172px;width:67px;text-align:center;font-size:11px;">3.15</div>
<div class="tr" style="left:655px;top:191px;width:49px;height:18px;"></div>
<div class="t" style="left:655.0px;top:194px;width:49px;text-align:center;font-size:11px;">Cpk</div>
<div class="sk" style="left:709px;top:191px;width:67px;height:18px;background:#00ff00"></div>
<div class="t" style="left:709.0px;top:194px;width:67px;text-align:center;font-size:11px;">3.07</div>
<div class="g" style="left:645px;top:241px;width:142px;height:160px;"></div>
<div class="gl" style="left:651px;top:236px;font-size:11px;">Lim. di Controllo</div>
<div class="tr" style="left:655px;top:263px;width:49px;height:18px;"></div>
<div class="t" style="left:655.0px;top:267px;width:49px;text-align:center;font-size:11px;">Xm</div>
<div class="sk" style="left:710px;top:265px;width:66px;height:17px;"></div>
<div class="t" style="left:710.0px;top:267px;width:66px;text-align:center;font-size:11px;">10.000</div>
<div class="tr" style="left:655px;top:285px;width:49px;height:18px;"></div>
<div class="t" style="left:655.0px;top:289px;width:49px;text-align:center;font-size:11px;">R</div>
<div class="sk" style="left:710px;top:287px;width:66px;height:17px;"></div>
<div class="t" style="left:710.0px;top:289px;width:66px;text-align:center;font-size:11px;">0.020</div>
<div class="tr" style="left:655px;top:306px;width:49px;height:18px;"></div>
<div class="t" style="left:655.0px;top:310px;width:49px;text-align:center;font-size:11px;">LCIX</div>
<div class="sk" style="left:710px;top:308px;width:66px;height:17px;"></div>
<div class="t" style="left:710.0px;top:310px;width:66px;text-align:center;font-size:11px;">9.950</div>
<div class="tr" style="left:655px;top:328px;width:49px;height:18px;"></div>
<div class="t" style="left:655.0px;top:332px;width:49px;text-align:center;font-size:11px;">LCSX</div>
<div class="sk" style="left:710px;top:330px;width:66px;height:17px;"></div>
<div class="t" style="left:710.0px;top:332px;width:66px;text-align:center;font-size:11px;">10.050</div>
<div class="tr" style="left:655px;top:350px;width:49px;height:18px;"></div>
<div class="t" style="left:655.0px;top:354px;width:49px;text-align:center;font-size:11px;">LCIR</div>
<div class="sk" style="left:710px;top:352px;width:66px;height:17px;"></div>
<div class="t" style="left:710.0px;top:354px;width:66px;text-align:center;font-size:11px;">0.000</div>
<div class="tr" style="left:655px;top:372px;width:49px;height:18px;"></div>
<div class="t" style="left:655.0px;top:376px;width:49px;text-align:center;font-size:11px;">LCSR</div>
<div class="sk" style="left:710px;top:374px;width:66px;height:17px;"></div>
<div class="t" style="left:710.0px;top:376px;width:66px;text-align:center;font-size:11px;">0.040</div>
<div class="rb" style="left:461px;top:381px;width:63px;height:23px;"></div>
<div class="t" style="left:461.0px;top:386px;width:63px;text-align:center;font-size:11px;"><u>P</u>rec. CdC</div>
<div class="rb" style="left:525px;top:381px;width:65px;height:23px;"></div>
<div class="t" style="left:525.0px;top:386px;width:65px;text-align:center;font-size:11px;"><u>S</u>ucc. CdC</div>
<div class="sk" style="left:592px;top:382px;width:48px;height:22px;"></div>
<div class="t" style="left:592.0px;top:386px;width:48px;text-align:center;font-size:14px;">1/2</div>
<div class="tr" style="left:462px;top:410px;width:63px;height:17px;"></div>
<div class="t" style="left:462.0px;top:412px;width:63px;text-align:center;font-size:13px;transform:scaleY(1.12);transform-origin:0 0">Pz. N°</div>
<div class="a" style="left:462px;top:428px;width:63px;height:18px;border:1px solid #000;background:#fff"></div>
<div class="t" style="left:462.0px;top:430px;width:63px;text-align:center;font-size:13px;transform:scaleY(1.12);transform-origin:0 0"></div>
<div class="tr" style="left:526px;top:410px;width:79px;height:17px;"></div>
<div class="t" style="left:526.0px;top:412px;width:79px;text-align:center;font-size:13px;transform:scaleY(1.12);transform-origin:0 0">LSI</div>
<div class="a" style="left:526px;top:428px;width:79px;height:18px;border:1px solid #000;background:#fff"></div>
<div class="t" style="left:526.0px;top:430px;width:79px;text-align:center;font-size:13px;transform:scaleY(1.12);transform-origin:0 0">9.900</div>
<div class="tr" style="left:606px;top:410px;width:78px;height:17px;"></div>
<div class="t" style="left:606.0px;top:412px;width:78px;text-align:center;font-size:13px;transform:scaleY(1.12);transform-origin:0 0">Nominale</div>
<div class="a" style="left:606px;top:428px;width:78px;height:18px;border:1px solid #000;background:#fff"></div>
<div class="t" style="left:606.0px;top:430px;width:78px;text-align:center;font-size:13px;transform:scaleY(1.12);transform-origin:0 0">10.000</div>
<div class="tr" style="left:686px;top:410px;width:79px;height:17px;"></div>
<div class="t" style="left:686.0px;top:412px;width:79px;text-align:center;font-size:13px;transform:scaleY(1.12);transform-origin:0 0">LSS</div>
<div class="a" style="left:686px;top:428px;width:79px;height:18px;border:1px solid #000;background:#fff"></div>
<div class="t" style="left:686.0px;top:430px;width:79px;text-align:center;font-size:13px;transform:scaleY(1.12);transform-origin:0 0">10.100</div>
<div class="a" style="left:462px;top:446px;width:304px;height:96px;background:#fff"></div>
<div class="a" style="left:462px;top:446px;width:304px;height:15px;background:#c0c0c0;"></div>
<div class="t" style="left:482px;top:448px;font-size:11px;">Valore</div>
<div class="t" style="left:600px;top:448px;font-size:11px;">Deviazione</div>
<div class="t" style="left:678px;top:448px;font-size:11px;">Posizione</div>
<div class="tr" style="left:462px;top:462px;width:18px;height:16px;"></div>
<div class="t" style="left:482px;top:464px;font-size:11px;color:#000">10.020</div>
<div class="t" style="left:600px;top:464px;font-size:11px;color:#000">0.020</div>
<div class="t" style="left:678px;top:464px;font-size:11px;color:#000;letter-spacing:0.2px">|---------+-*-------|</div>
<div class="a" style="left:462px;top:477px;width:304px;height:1px;background:#808080;"></div>
<div class="a" style="left:462px;top:477px;width:18px;height:1px;background:#000;"></div>
<div class="tr" style="left:462px;top:478px;width:18px;height:16px;"></div>
<div class="t" style="left:482px;top:480px;font-size:11px;color:#000">10.030</div>
<div class="t" style="left:600px;top:480px;font-size:11px;color:#000">0.030</div>
<div class="t" style="left:678px;top:480px;font-size:11px;color:#000;letter-spacing:0.2px">|---------+--*------|</div>
<div class="a" style="left:462px;top:493px;width:304px;height:1px;background:#808080;"></div>
<div class="a" style="left:462px;top:493px;width:18px;height:1px;background:#000;"></div>
<div class="tr" style="left:462px;top:494px;width:18px;height:16px;"></div>
<div class="t" style="left:482px;top:496px;font-size:11px;color:#000">9.990</div>
<div class="t" style="left:600px;top:496px;font-size:11px;color:#000">-0.010</div>
<div class="t" style="left:678px;top:496px;font-size:11px;color:#000;letter-spacing:0.2px">|--------*+---------|</div>
<div class="a" style="left:462px;top:509px;width:304px;height:1px;background:#808080;"></div>
<div class="a" style="left:462px;top:509px;width:18px;height:1px;background:#000;"></div>
<div class="tr" style="left:462px;top:510px;width:18px;height:16px;"></div>
<div class="a" style="left:481px;top:510px;width:285px;height:15px;background:#000;"></div>
<svg class="a" style="left:468px;top:512px" width="8" height="12" viewBox="0 0 8 12"><path d="M1,0.5 L7,6 L1,11.5 Z" fill="#000"/></svg>
<div class="t" style="left:482px;top:512px;font-size:11px;color:#fff">9.997</div>
<div class="t" style="left:600px;top:512px;font-size:11px;color:#fff">-0.003</div>
<div class="t" style="left:678px;top:512px;font-size:11px;color:#fff;letter-spacing:0.2px">|---------*---------|</div>
<div class="a" style="left:462px;top:525px;width:304px;height:1px;background:#808080;"></div>
<div class="a" style="left:462px;top:525px;width:18px;height:1px;background:#000;"></div>
<div class="tr" style="left:462px;top:526px;width:18px;height:16px;"></div>
<div class="t" style="left:482px;top:528px;font-size:11px;color:#000"></div>
<div class="t" style="left:600px;top:528px;font-size:11px;color:#000"></div>
<div class="t" style="left:678px;top:528px;font-size:11px;color:#000"></div>
<div class="a" style="left:462px;top:541px;width:304px;height:1px;background:#808080;"></div>
<div class="a" style="left:462px;top:541px;width:18px;height:1px;background:#000;"></div>
<div class="a" style="left:462px;top:446px;width:18px;height:15px;background:#c0c0c0;border:1px solid;border-color:#fff #808080 #808080 #fff"></div>
<div class="a" style="left:480px;top:446px;width:1px;height:96px;background:#000;"></div>
<div class="a" style="left:462px;top:461px;width:304px;height:1px;background:#000;"></div>
<div class="a" style="left:598px;top:446px;width:1px;height:96px;background:#808080;"></div>
<div class="a" style="left:676px;top:446px;width:1px;height:96px;background:#808080;"></div>
<div class="a" style="left:765px;top:446px;width:1px;height:96px;background:#808080;"></div>
<div class="a" style="left:462px;top:541px;width:304px;height:1px;background:#808080;"></div>
<div class="rb" style="left:4px;top:570px;width:73px;height:23px;"></div>
<div class="t" style="left:4.0px;top:575px;width:73px;text-align:center;font-size:11px;"><u>A</u>vvio... (F6)</div>
<div class="rb" style="left:78px;top:570px;width:73px;height:23px;"></div>
<div class="t dis" style="left:78.0px;top:575px;width:73px;text-align:center;font-size:11px;">Sal<u>v</u>a (F7)</div>
<div class="rb" style="left:152px;top:570px;width:73px;height:23px;"></div>
<div class="t" style="left:152.0px;top:575px;width:73px;text-align:center;font-size:11px;">Sta<u>m</u>pa (F8)</div>
<div class="rb" style="left:226px;top:570px;width:73px;height:23px;"></div>
<div class="t" style="left:226.0px;top:575px;width:73px;text-align:center;font-size:11px;"><u>I</u>nfo (F9)</div>
<div class="rb" style="left:300px;top:570px;width:73px;height:23px;"></div>
<div class="t dis" style="left:300.0px;top:575px;width:73px;text-align:center;font-size:11px;"><u>T</u>ast. (F2)</div>
<div class="rb" style="left:719px;top:570px;width:73px;height:23px;"></div>
<div class="t" style="left:719.0px;top:575px;width:73px;text-align:center;font-size:11px;">C<u>h</u>iudi (F3)</div>
<div class="a" style="left:0px;top:596px;width:800px;height:1px;background:#808080;"></div>
<div class="a" style="left:0px;top:597px;width:800px;height:1px;background:#fff;"></div>
</div></body></html>
